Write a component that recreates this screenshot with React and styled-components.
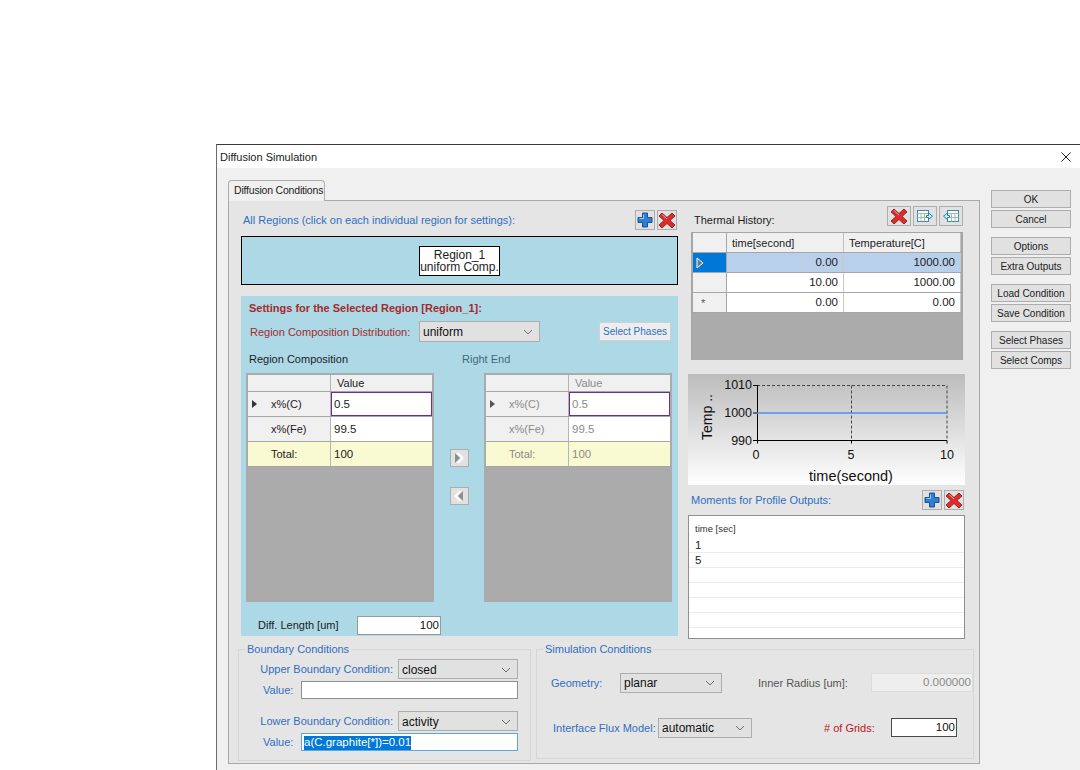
import React from 'react';
import styled, { createGlobalStyle } from 'styled-components';

const Global = createGlobalStyle`
  * { box-sizing: border-box; }
  html, body { margin: 0; padding: 0; background: #fff; overflow: hidden; }
  body { font-family: "Liberation Sans", Arial, sans-serif; font-size: 11px; color: #1c1c1c; }
`;

const Page = styled.div`
  width: 1080px;
  height: 770px;
  padding: 144px 0 0 216px;
`;

const Win = styled.div`
  height: 626px;
  border-top: 1px solid #3a3a3a;
  border-left: 1px solid #6b6b6b;
  background: #f0f0f0;
  display: flex;
  flex-direction: column;
`;

const TitleBar = styled.div`
  height: 23px;
  flex: none;
  background: #fff;
  display: flex;
  align-items: center;
  justify-content: space-between;
  padding: 0 9px 0 3px;
  color: #222;
`;

const Body = styled.div`
  flex: 1;
  display: flex;
  padding: 12px 0 0 11px;
`;

const Tabs = styled.div`
  width: 752px;
  flex: none;
`;

const Tab = styled.div`
  width: 97px;
  height: 21px;
  background: #f0f0f0;
  border: 1px solid #adadad;
  border-bottom: none;
  border-radius: 4px 4px 0 0;
  padding: 3px 0 0 5px;
  font-size: 10.5px;
  letter-spacing: -0.2px;
  margin-bottom: -1px;
  position: relative;
`;

const TabPanel = styled.div`
  height: 564px;
  background: #e5e5e5;
  border: 1px solid #a9a9a9;
  padding: 0 0 0 9px;
`;

const TopRow = styled.div`
  display: flex;
  gap: 10px;
  padding-left: 3px;
`;

const LeftCol = styled.div`
  width: 437px;
  padding-top: 9px;
`;

const RightCol = styled.div`
  width: 277px;
  padding-top: 5px;
`;

const HeadRow = styled.div`
  height: ${p => p.$h || 20}px;
  display: flex;
  align-items: ${p => p.$end ? 'flex-end' : 'center'};
  justify-content: space-between;
  padding: ${p => p.$pad || '0 1px 0 2px'};
`;

const BlueText = styled.span`
  color: #2f6fc0;
`;

const IconGroup = styled.div`
  display: flex;
  gap: ${p => p.$gap ?? 2}px;
`;

const IconBtn = styled.div`
  width: ${p => p.$w || 20}px;
  height: ${p => p.$h || 20}px;
  background: #e1e1e1;
  border: 1px solid #adadad;
  display: flex;
  align-items: center;
  justify-content: center;
`;

const RegionBar = styled.div`
  height: 49px;
  margin-top: 6px;
  background: #add8e6;
  border: 1px solid #000;
  display: flex;
  align-items: center;
  justify-content: center;
`;

const RegionBox = styled.div`
  width: 81px;
  height: 30px;
  background: #fff;
  border: 1px solid #000;
  font-size: 12px;
  line-height: 12px;
  text-align: center;
  padding-top: 2px;
`;

const Settings = styled.div`
  height: 340px;
  margin-top: 11px;
  background: #add8e6;
  padding: 6px 6px 0 5px;
`;

const SettingsTitle = styled.div`
  font-weight: bold;
  color: #a52a2a;
  padding-left: 3px;
  height: 19px;
`;

const DistRow = styled.div`
  display: flex;
  align-items: center;
  height: 21px;
  padding-left: 4px;
`;

const DistLabel = styled.span`
  color: #a52a2a;
  width: 169px;
`;

const SelectBox = styled.div`
  width: ${p => p.$w}px;
  height: ${p => p.$h || 20}px;
  flex: none;
  background: #e1e1e1;
  border: 1px solid #adadad;
  display: flex;
  align-items: center;
  justify-content: space-between;
  padding: 1px 6px 0 3px;
  font-size: 12px;
  color: #111;
`;

const SmallButton = styled.div`
  width: 72px;
  height: 19px;
  margin-left: 59px;
  background: #ededed;
  border: 1px solid #d0d0d0;
  color: #2f6fc0;
  font-size: 10px;
  text-align: center;
  line-height: 17px;
`;

const GridTitles = styled.div`
  display: flex;
  height: 31px;
  padding-top: 11px;
`;

const GridTitle = styled.span`
  width: 238px;
  padding-left: ${p => p.$left || 3}px;
  color: ${p => p.$dim ? '#3d6b7c' : '#1c1c1c'};
`;

const Comps = styled.div`
  display: flex;
`;

const Arrows = styled.div`
  width: 50px;
  display: flex;
  flex-direction: column;
  align-items: center;
  gap: 20px;
  padding-top: 76px;
`;

const CompGrid = styled.div`
  width: 188px;
  height: 229px;
  background: #ababab;
  border: 2px solid #ababab;
  border-bottom: none;
  color: ${p => p.$dim ? '#8a8a8a' : '#1c1c1c'};
`;

const CompRow = styled.div`
  display: grid;
  grid-template-columns: 83px 1fr;
  height: ${p => p.$h || 25}px;
  background: ${p => p.$total ? '#fafad2' : '#f0f0f0'};
  border-bottom: 1px solid #a6a6a6;
`;

const CompHead = styled.div`
  display: flex;
  align-items: center;
  padding-left: ${p => p.$pad || 23}px;
  border-right: 1px solid #b5b5b5;
  position: relative;
`;

const Caret = styled.span`
  position: absolute;
  left: 4px;
  top: 8px;
  width: 0;
  height: 0;
  border-left: 5px solid ${p => p.$dim ? '#555' : '#333'};
  border-top: 4px solid transparent;
  border-bottom: 4px solid transparent;
`;

const CompCell = styled.div`
  display: flex;
  align-items: center;
  padding: 0 3px;
  font-size: 11.5px;
  background: ${p => p.$total ? '#fafad2' : '#fff'};
  ${p => p.$active && 'box-shadow: inset 0 0 0 1px #6f2c91; border: 0;'}
`;

const ValueHead = styled.div`
  display: flex;
  align-items: center;
  padding-left: 6px;
`;

const DiffRow = styled.div`
  display: flex;
  align-items: center;
  height: 20px;
  margin-top: 13px;
  padding-left: 12px;
`;

const DiffLabel = styled.span`
  width: 99px;
`;

const NumInput = styled.div`
  width: ${p => p.$w}px;
  height: ${p => p.$h || 19}px;
  flex: none;
  background: ${p => p.$off ? '#eeeeee' : '#fff'};
  border: 1px solid ${p => p.$dark ? '#4a4a4a' : p.$off ? '#dcdcdc' : '#9a9a9a'};
  color: ${p => p.$off ? '#8a8a8a' : '#111'};
  font-size: 11.5px;
  text-align: right;
  padding-right: 1px;
  line-height: 17px;
`;

const ThermalGrid = styled.div`
  width: 272px;
  height: 128px;
  margin: 6px 0 0 3px;
  background: #ababab;
  border: 1px solid #a6a6a6;
  border-bottom: none;
`;

const ThermalRow = styled.div`
  display: grid;
  grid-template-columns: 34px 117px 1fr;
  height: ${p => p.$h || 20}px;
  background: #fff;
  border: solid #a6a6a6;
  border-width: 0 1px 1px;
`;

const ThermalHead = styled.div`
  background: ${p => p.$sel ? '#0078d7' : '#f0f0f0'};
  border-right: 1px solid #a6a6a6;
  display: flex;
  align-items: center;
  padding-left: 3px;
  color: #555;
`;

const ColHead = styled.div`
  background: #f0f0f0;
  border-right: 1px solid #c0c0c0;
  display: flex;
  align-items: center;
  padding-left: 5px;
`;

const ThermalCell = styled.div`
  background: ${p => p.$sel ? '#b9d0ea' : '#fff'};
  border-right: 1px solid #c8c8c8;
  text-align: right;
  padding: 3px 5px 0 0;
  font-size: 11.5px;
`;

const ChartWrap = styled.div`
  height: 111px;
  margin-top: 14px;
`;

const MomentList = styled.div`
  height: 124px;
  margin-top: 5px;
  background: #fff;
  border: 1px solid #8f8f8f;
  overflow: hidden;
`;

const MomentHead = styled.div`
  height: 22px;
  padding: 7px 0 0 6px;
  font-size: 9.5px;
  color: #333;
`;

const MomentRow = styled.div`
  height: 15px;
  border-bottom: 1px solid #ececec;
  padding-left: 6px;
  font-size: 11.5px;
  line-height: 14px;
`;

const BottomRow = styled.div`
  display: flex;
  gap: 5px;
  margin-top: 4px;
`;

const Group = styled.fieldset`
  width: ${p => p.$w}px;
  height: ${p => p.$h}px;
  margin: 0;
  padding: 0;
  border: 1px solid #d6d6d6;
`;

const Legend = styled.legend`
  margin-left: ${p => p.$m || 6}px;
  padding: 0 2px;
  color: #2f6fc0;
  font-size: 11px;
  line-height: 13px;
`;

const BoundaryRows = styled.div`
  display: grid;
  grid-template-columns: 159px 120px;
  padding-top: 3px;
  justify-items: end;
  align-items: center;
`;

const RowLabel = styled.span`
  color: ${p => p.$red ? '#c0141e' : p.$plain ? '#555' : '#2f6fc0'};
  justify-self: ${p => p.$start ? 'start' : 'end'};
  padding-right: ${p => p.$pr ?? 5}px;
  padding-left: ${p => p.$pl || 0}px;
  white-space: nowrap;
`;

const ValueRow = styled.div`
  grid-column: 1 / 3;
  justify-self: stretch;
  display: flex;
  align-items: center;
  justify-content: space-between;
  padding-left: 24px;
  height: 18px;
  margin: ${p => p.$m || '2px 0 12px'};
`;

const TextBox = styled.div`
  width: 217px;
  height: 18px;
  background: #fff;
  border: 1px solid ${p => p.$focus ? '#5aa9dc' : '#8f8f8f'};
  padding: 2px;
  font-size: 11.5px;
  line-height: 13px;
`;

const Selected = styled.span`
  background: #0078d7;
  color: #fff;
  display: inline-block;
  height: 14px;
`;

const SimGrid = styled.div`
  display: grid;
  grid-template-columns: 69px 102px 36px 113px 102px;
  grid-template-rows: 21px 21px;
  row-gap: 24px;
  padding: 16px 0 0 14px;
  align-items: center;
`;

const SimBottom = styled.div`
  grid-column: 1 / -1;
  display: flex;
  align-items: center;
  padding-left: 2px;
`;

const FluxLabel = styled.span`
  width: 105px;
  color: #2f6fc0;
`;

const GridsLabel = styled.span`
  width: 67px;
  margin-left: 72px;
  color: #c0141e;
`;

const SideButtons = styled.div`
  margin-left: 11px;
  padding-top: 10px;
  display: flex;
  flex-direction: column;
`;

const SideBtn = styled.button`
  width: 80px;
  height: 18px;
  padding: 0;
  margin-bottom: ${p => p.$gap || 2}px;
  background: #e1e1e1;
  border: 1px solid #adadad;
  font-family: inherit;
  font-size: 10px;
  color: #222;
`;

const Chevron = () => (
  <svg width="10" height="6" viewBox="0 0 10 6"><path d="M1 1l4 4 4-4" fill="none" stroke="#6d6d6d" /></svg>
);

const Plus = () => (
  <svg width="16" height="16" viewBox="0 0 16 16">
    <path d="M5.5 1h5v4.500h4.500v5h-4.500v4.500h-5v-4.500h-4.500v-5h4.500z" fill="#2f7fd6" stroke="#1d4f8f" />
    <path d="M6.500 2.500v4h-4" fill="none" stroke="#9cc9f5" />
  </svg>
);

const Cross = ({ size = 18 }) => (
  <svg width={size} height={size} viewBox="0 0 18 18">
    <path d="M4 2l5 4.500 5-4.500 3 3-5 4.500 5 4.500-3 3-5-4.500-5 4.500-3-3 5-4.500-5-4.500z" fill="#e02a2a" stroke="#8c2b2b" strokeLinejoin="round" />
    <path d="M4 3.500l5 4.500" stroke="#f5a0a0" fill="none" />
  </svg>
);

const TableArrow = ({ flip }) => (
  <svg width="18" height="14" viewBox="0 0 18 14">
    <g transform={flip ? 'translate(18 0) scale(-1 1)' : undefined}>
      <rect x="1.500" y="1.500" width="11" height="11" fill="#fff" stroke="#3a87b8" />
      <path d="M1.500 4.500h11M5 4.500v8M8.500 4.500v8M1.500 8.500h11" stroke="#9cc0a0" fill="none" />
      <path d="M12.500 4v2.500h-2v2h2v2l4-3.300z" fill="#d8eefa" stroke="#1f7fb8" strokeLinejoin="round" />
    </g>
  </svg>
);

const Shift = ({ left }) => (
  <svg width="12" height="12" viewBox="0 0 12 12">
    <path d={left ? 'M9 1L4 6l5 5H6L1 6l5-5z' : 'M3 1l5 5-5 5h3l5-5-5-5z'} fill="#fff" />
    <path d={left ? 'M10 1L5 6l5 5z' : 'M2 1l5 5-5 5z'} fill="#8e8e8e" />
  </svg>
);

const Chart = () => (
  <svg width="277" height="111" viewBox="0 0 277 111" style={{ display: 'block' }}>
    <defs>
      <linearGradient id="chartBg" x1="0" y1="0" x2="0" y2="1">
        <stop offset="0" stopColor="#bcbcbc" />
        <stop offset="1" stopColor="#ffffff" />
      </linearGradient>
    </defs>
    <rect width="277" height="111" fill="url(#chartBg)" />
    <path d="M69 11.500H259V66M163.500 11.500V66" fill="none" stroke="#444" strokeDasharray="3 2" />
    <path d="M69.500 11V66.500H259" fill="none" stroke="#000" strokeWidth="1" />
    <path d="M65 11.500h4M65 39h4M65 66.500h4M69.500 66.500v3M163.500 66.500v3M259 66.500v3" stroke="#000" />
    <path d="M69 39H259" stroke="#4a90f0" strokeWidth="1.500" />
    <g fontFamily="Liberation Sans, Arial, sans-serif" fontSize="12.500" fill="#111" textAnchor="end">
      <text x="64" y="15">1010</text>
      <text x="64" y="43">1000</text>
      <text x="64" y="71">990</text>
    </g>
    <g fontFamily="Liberation Sans, Arial, sans-serif" fontSize="12.500" fill="#111" textAnchor="middle">
      <text x="68" y="85">0</text>
      <text x="163" y="85">5</text>
      <text x="259" y="85">10</text>
      <text x="163" y="107" fontSize="14.500">time(second)</text>
      <text transform="translate(24 43) rotate(-90)" fontSize="14">Temp ..</text>
    </g>
  </svg>
);

const compRows = [
  { name: 'x%(C)', value: '0.5', active: true, caret: true },
  { name: 'x%(Fe)', value: '99.5' },
  { name: 'Total:', value: '100', total: true },
];

const CompTable = ({ dim }) => (
  <CompGrid $dim={dim}>
    <CompRow $h={17}>
      <CompHead />
      <ValueHead>Value</ValueHead>
    </CompRow>
    {compRows.map(r => (
      <CompRow key={r.name} $total={r.total}>
        <CompHead>
          {r.caret && <Caret $dim={dim} />}
          {r.name}
        </CompHead>
        <CompCell $active={r.active} $total={r.total}>{r.value}</CompCell>
      </CompRow>
    ))}
  </CompGrid>
);

const thermal = [
  { t: '0.00', c: '1000.00', sel: true },
  { t: '10.00', c: '1000.00' },
  { t: '0.00', c: '0.00', mark: '*' },
];

const sideGroups = [
  ['OK', 'Cancel'],
  ['Options', 'Extra Outputs'],
  ['Load Condition', 'Save Condition'],
  ['Select Phases', 'Select Comps'],
];

export default function App() {
  return (
    <Page>
      <Global />
      <Win>
        <TitleBar>
          Diffusion Simulation
          <svg width="10" height="10" viewBox="0 0 10 10"><path d="M.5.5l9 9M9.500.5l-9 9" stroke="#222" /></svg>
        </TitleBar>
        <Body>
          <Tabs>
            <Tab>Diffusion Conditions</Tab>
            <TabPanel>
              <TopRow>
                <LeftCol>
                  <HeadRow>
                    <BlueText>All Regions (click on each individual region for settings):</BlueText>
                    <IconGroup>
                      <IconBtn><Plus /></IconBtn>
                      <IconBtn><Cross /></IconBtn>
                    </IconGroup>
                  </HeadRow>
                  <RegionBar>
                    <RegionBox>Region_1<br />uniform Comp.</RegionBox>
                  </RegionBar>
                  <Settings>
                    <SettingsTitle>Settings for the Selected Region [Region_1]:</SettingsTitle>
                    <DistRow>
                      <DistLabel>Region Composition Distribution:</DistLabel>
                      <SelectBox $w={121} $h={21}>uniform<Chevron /></SelectBox>
                      <SmallButton>Select Phases</SmallButton>
                    </DistRow>
                    <GridTitles>
                      <GridTitle>Region Composition</GridTitle>
                      <GridTitle $dim>Right End</GridTitle>
                    </GridTitles>
                    <Comps>
                      <CompTable />
                      <Arrows>
                        <IconBtn $w={19} $h={18}><Shift /></IconBtn>
                        <IconBtn $w={19} $h={18}><Shift left /></IconBtn>
                      </Arrows>
                      <CompTable dim />
                    </Comps>
                    <DiffRow>
                      <DiffLabel>Diff. Length [um]</DiffLabel>
                      <NumInput $w={84}>100</NumInput>
                    </DiffRow>
                  </Settings>
                </LeftCol>
                <RightCol>
                  <HeadRow $h={20} $end $pad="0 2px 0 6px">
                    <span>Thermal History:</span>
                    <IconGroup>
                      <IconBtn $w={24}><Cross /></IconBtn>
                      <IconBtn $w={24}><TableArrow /></IconBtn>
                      <IconBtn $w={24}><TableArrow flip /></IconBtn>
                    </IconGroup>
                  </HeadRow>
                  <ThermalGrid>
                    <ThermalRow $h={20}>
                      <ThermalHead />
                      <ColHead>time[second]</ColHead>
                      <ColHead>Temperature[C]</ColHead>
                    </ThermalRow>
                    {thermal.map((r, i) => (
                      <ThermalRow key={i}>
                        <ThermalHead $sel={r.sel}>
                          {r.sel && (
                            <svg width="8" height="12" viewBox="0 0 8 12"><path d="M1 1l6 5-6 5z" fill="#777" stroke="#fff" /></svg>
                          )}
                          {r.mark && <span style={{ paddingLeft: 5 }}>{r.mark}</span>}
                        </ThermalHead>
                        <ThermalCell $sel={r.sel}>{r.t}</ThermalCell>
                        <ThermalCell $sel={r.sel}>{r.c}</ThermalCell>
                      </ThermalRow>
                    ))}
                  </ThermalGrid>
                  <ChartWrap><Chart /></ChartWrap>
                  <HeadRow $h={20} $pad="0 1px 0 3px" style={{ marginTop: 5 }}>
                    <BlueText>Moments for Profile Outputs:</BlueText>
                    <IconGroup>
                      <IconBtn><Plus /></IconBtn>
                      <IconBtn><Cross /></IconBtn>
                    </IconGroup>
                  </HeadRow>
                  <MomentList>
                    <MomentHead>time [sec]</MomentHead>
                    {['1', '5', '', '', '', ''].map((v, i) => <MomentRow key={i}>{v}</MomentRow>)}
                  </MomentList>
                </RightCol>
              </TopRow>
              <BottomRow>
                <Group $w={293} $h={118}>
                  <Legend>Boundary Conditions</Legend>
                  <BoundaryRows>
                    <RowLabel>Upper Boundary Condition:</RowLabel>
                    <SelectBox $w={120}>closed<Chevron /></SelectBox>
                    <ValueRow>
                      <RowLabel $pr={0}>Value:</RowLabel>
                      <TextBox />
                    </ValueRow>
                    <RowLabel>Lower Boundary Condition:</RowLabel>
                    <SelectBox $w={120}>activity<Chevron /></SelectBox>
                    <ValueRow $m="2px 0 0">
                      <RowLabel $pr={0}>Value:</RowLabel>
                      <TextBox $focus><Selected>a(C.graphite[*])=0.01</Selected></TextBox>
                    </ValueRow>
                  </BoundaryRows>
                </Group>
                <Group $w={431} $h={116}>
                  <Legend>Simulation Conditions</Legend>
                  <SimGrid>
                    <RowLabel $start $pr={0}><BlueText>Geometry:</BlueText></RowLabel>
                    <SelectBox $w={102}>planar<Chevron /></SelectBox>
                    <span />
                    <RowLabel $start $plain $pr={0}>Inner Radius [um]:</RowLabel>
                    <NumInput $w={102} $off>0.000000</NumInput>
                    <SimBottom>
                      <FluxLabel>Interface Flux Model:</FluxLabel>
                      <SelectBox $w={94}>automatic<Chevron /></SelectBox>
                      <GridsLabel># of Grids:</GridsLabel>
                      <NumInput $w={66} $dark>100</NumInput>
                    </SimBottom>
                  </SimGrid>
                </Group>
              </BottomRow>
            </TabPanel>
          </Tabs>
          <SideButtons>
            {sideGroups.map(g => g.map((label, i) => (
              <SideBtn key={label} $gap={i === 1 ? 9 : 2}>{label}</SideBtn>
            )))}
          </SideButtons>
        </Body>
      </Win>
    </Page>
  );
}
